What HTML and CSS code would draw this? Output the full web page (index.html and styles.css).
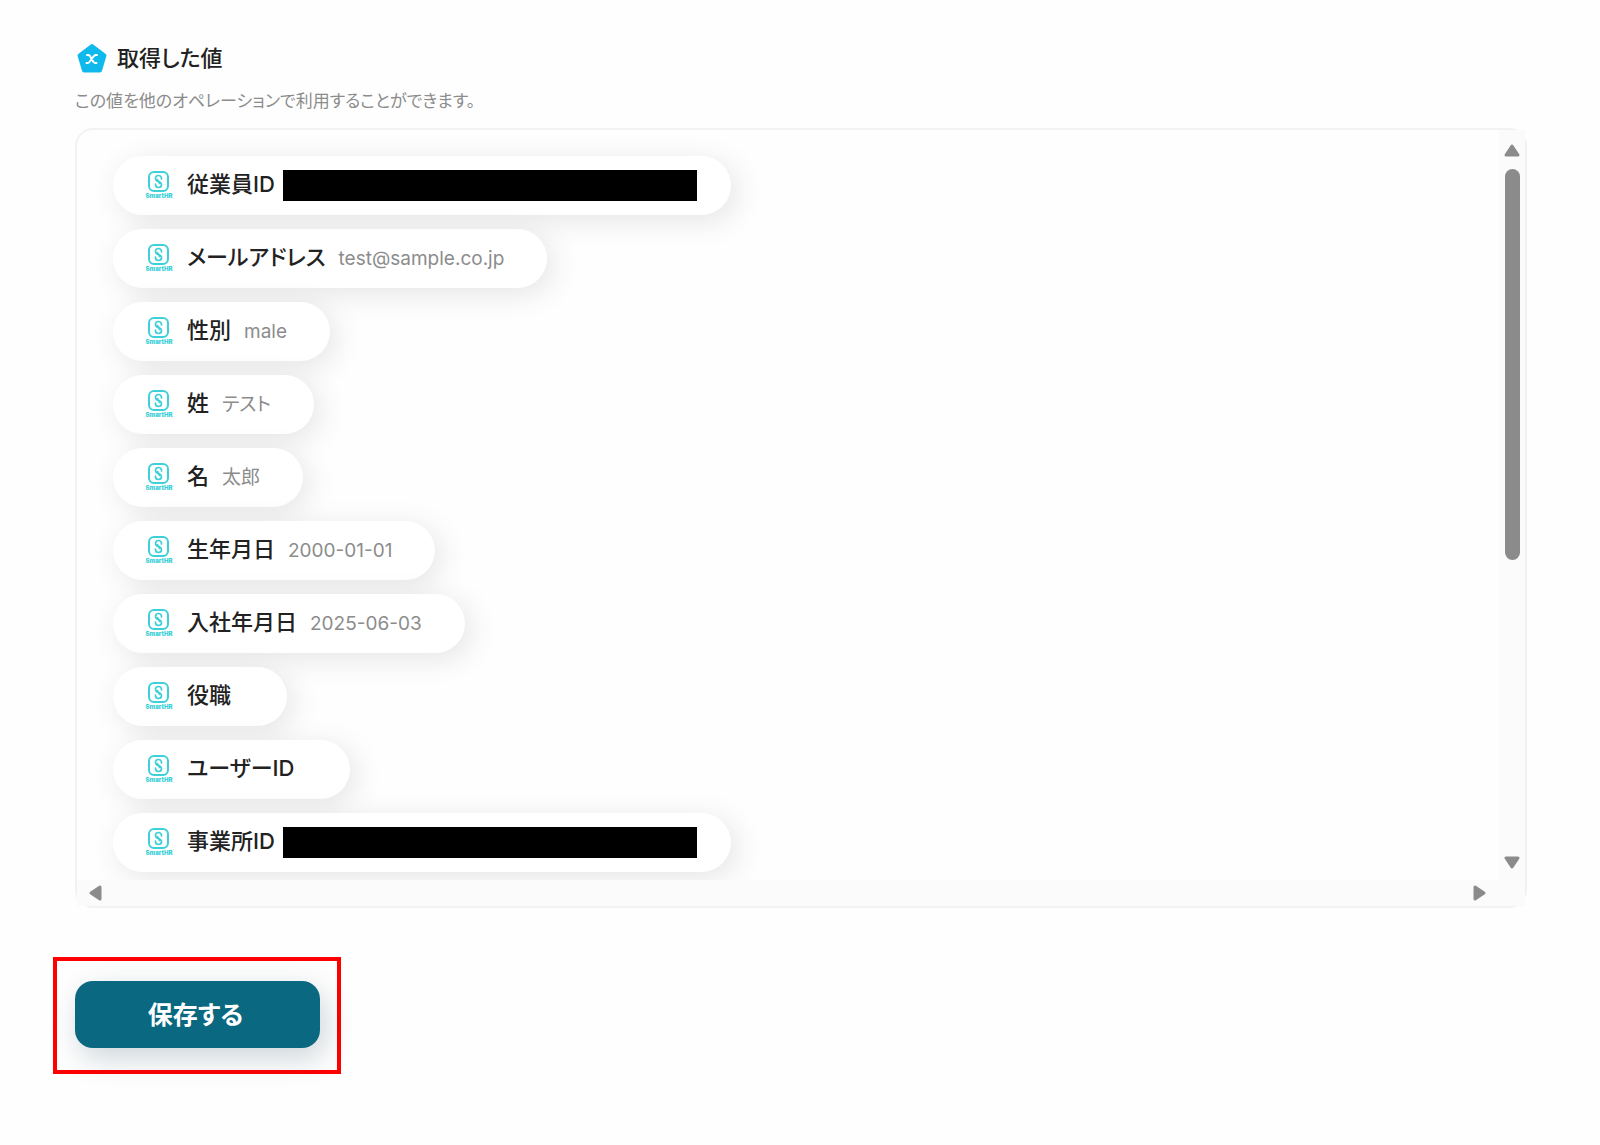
FILE: index.html
```html
<!DOCTYPE html>
<html lang="ja">
<head>
    <meta charset="UTF-8">
    <meta name="viewport" content="width=device-width, initial-scale=1.0">
    <title>取得した値</title>
    <link rel="stylesheet" href="styles.css">
</head>
<body>
    <svg width="0" height="0" class="sprite">
        <symbol id="smarthr" viewBox="0 0 28 30">
            <g fill="none" stroke="#3dd0d8" stroke-linecap="round">
                <rect x="4" y="1" width="19" height="19" rx="5" stroke-width="2"/>
                <path d="M16.500 8V7.500a3 3 0 0 0-6 0c0 3.500 4 2 4 5M10.500 13v.5a3 3 0 0 0 6 0c0-3.500-4-2-4-5" stroke-width="1.700"/>
            </g>
        </symbol>
    </svg>

    <main>
        <div class="header">
            <h2>
                <svg class="badge" viewBox="0 0 30 30">
                    <path d="M15 3 27.500 12.500 23 27.500H7L2.500 12.500Z" fill="#0fb9ec" stroke="#0fb9ec" stroke-width="4" stroke-linejoin="round"/>
                    <path d="M10 12h1c1 0 1.500.5 2 1l3.500 6c.5.700 1 1 2 1h1M20 12h-1c-1 0-1.500.5-2 1l-4.500 6c-.5.700-1 1-2 1h-1" fill="none" stroke="#fff" stroke-width="2" stroke-linecap="round"/>
                </svg>
                取得した値
            </h2>
            <p>この値を他のオペレーションで利用することができます。</p>
        </div>

        <div class="panel">
            <ul class="values">
                <li class="redacted"><div class="logo"><svg><use href="#smarthr"/></svg><small>SmartHR</small></div><b>従業員ID</b><span class="mask"></span></li>
                <li><div class="logo"><svg><use href="#smarthr"/></svg><small>SmartHR</small></div><b>メールアドレス</b><span>test@sample.co.jp</span></li>
                <li><div class="logo"><svg><use href="#smarthr"/></svg><small>SmartHR</small></div><b>性別</b><span>male</span></li>
                <li><div class="logo"><svg><use href="#smarthr"/></svg><small>SmartHR</small></div><b>姓</b><span>テスト</span></li>
                <li><div class="logo"><svg><use href="#smarthr"/></svg><small>SmartHR</small></div><b>名</b><span>太郎</span></li>
                <li><div class="logo"><svg><use href="#smarthr"/></svg><small>SmartHR</small></div><b>生年月日</b><span>2000-01-01</span></li>
                <li><div class="logo"><svg><use href="#smarthr"/></svg><small>SmartHR</small></div><b>入社年月日</b><span>2025-06-03</span></li>
                <li><div class="logo"><svg><use href="#smarthr"/></svg><small>SmartHR</small></div><b>役職</b><span></span></li>
                <li><div class="logo"><svg><use href="#smarthr"/></svg><small>SmartHR</small></div><b>ユーザーID</b><span></span></li>
                <li class="redacted"><div class="logo"><svg><use href="#smarthr"/></svg><small>SmartHR</small></div><b>事業所ID</b><span class="mask"></span></li>
            </ul>
            <div class="scroll-y">
                <svg class="arrow" viewBox="0 0 16 16"><path d="M8 4 14 13H2Z"/></svg>
                <div class="track"><div class="thumb"></div></div>
                <svg class="arrow" viewBox="0 0 16 16"><path d="M8 13 2 4H14Z"/></svg>
            </div>
            <div class="scroll-x">
                <svg class="arrow" viewBox="0 0 16 16"><path d="M3 8 12 2V14Z"/></svg>
                <svg class="arrow" viewBox="0 0 16 16"><path d="M13 8 4 2V14Z"/></svg>
            </div>
        </div>

        <div class="highlight">
            <button type="button">保存する</button>
        </div>
    </main>
</body>
</html>
```

FILE: styles.css
```css
* {
    box-sizing: border-box;
}

body {
    margin: 0;
    padding: 42px 0 60px;
    background-color: #fefefe;
    color: #222;
    font-family: Inter, 'Noto Sans CJK JP', sans-serif;
    font-feature-settings: "palt";
}

.sprite {
    display: block;
}

.header {
    margin: 0 73px 0 75px;
}

h2 {
    display: flex;
    align-items: center;
    gap: 10px;
    margin: 0;
    padding-left: 2px;
    font-size: 22px;
    font-weight: 500;
    line-height: 32px;
}

.badge {
    width: 30px;
    height: 30px;
}

.header p {
    margin: 15px 0;
    color: #8c8c8c;
    font-size: 17px;
    line-height: 24px;
}

.panel {
    display: grid;
    grid-template-columns: 1fr 26px;
    margin: 0 73px 0 75px;
    border: 2px solid #f2f2f2;
    border-radius: 18px;
}

.values {
    display: flex;
    flex-direction: column;
    align-items: flex-start;
    gap: 14px;
    margin: 0;
    padding: 26px 36px 8px;
    list-style-type: none;
    overflow: hidden;
    border-top-left-radius: 16px;
}

.values li {
    display: flex;
    align-items: center;
    height: 59px;
    padding: 0 43px 0 32px;
    border-radius: 30px;
    background-color: #fff;
    box-shadow: 6px 6px 30px rgba(0, 0, 0, 0.1);
}

.values b {
    margin: 0 13px 0 14px;
    padding-bottom: 4px;
    font-size: 22px;
    font-weight: 500;
    line-height: 32px;
}

.values span {
    color: #8c8c8c;
    font-size: 19px;
    line-height: 28px;
}

.logo {
    width: 28px;
    height: 30px;
    text-align: center;
}

.logo svg {
    display: block;
    width: 28px;
    height: 30px;
    margin-bottom: -9px;
}

.logo small {
    display: block;
    color: #3dd0d8;
    font-size: 6px;
    font-weight: 900;
    line-height: 8px;
}

.values .redacted {
    padding-right: 34px;
}

.redacted b {
    margin-right: 8px;
}

.redacted .mask {
    width: 414px;
    height: 31px;
    background-color: #000;
}

.scroll-y {
    display: flex;
    flex-direction: column;
    align-items: center;
    padding: 12px 0 10px;
    background-color: #fbfbfb;
}

.track {
    flex: 1;
    margin: 11px 0;
}

.thumb {
    width: 15px;
    height: 58%;
    border-radius: 8px;
    background-color: #8b8b8b;
}

.arrow {
    width: 16px;
    height: 16px;
}

.arrow path {
    fill: #8b8b8b;
    stroke: #8b8b8b;
    stroke-width: 3;
    stroke-linejoin: round;
}

.scroll-x {
    grid-column: 1 / -1;
    display: flex;
    justify-content: space-between;
    align-items: center;
    height: 26px;
    padding: 0 38px 0 11px;
    background-color: #fbfbfb;
}

.highlight {
    display: inline-block;
    margin: 49px 0 0 53px;
    padding: 20px 17px 22px 18px;
    border: 4px solid #f00;
}

button {
    display: block;
    width: 245px;
    height: 67px;
    padding: 0 4px 4px 0;
    border: none;
    border-radius: 18px;
    background-color: #0a6880;
    box-shadow: 5px 10px 30px rgba(10, 50, 70, 0.2);
    color: #fff;
    font-family: inherit;
    font-size: 25px;
    font-weight: 700;
    font-feature-settings: inherit;
    cursor: pointer;
}
```
